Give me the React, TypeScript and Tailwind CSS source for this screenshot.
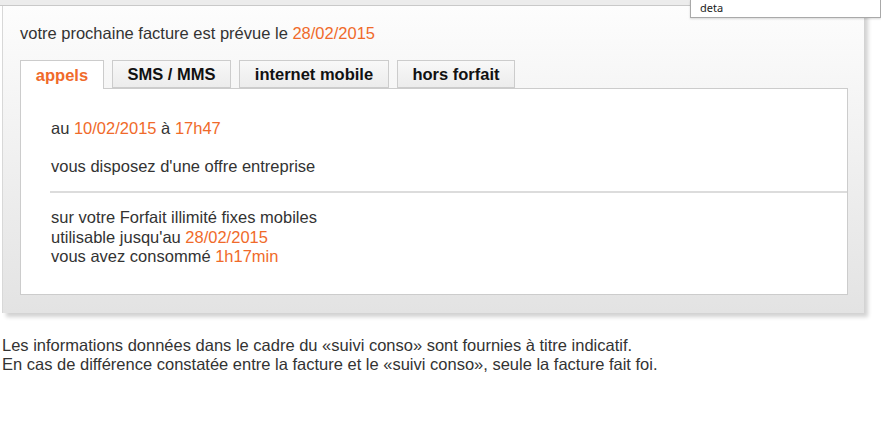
export default function App() {
  const orange = 'text-[#f06a2a]';
  return (
    <div className="relative w-[881px] h-[439px] bg-white font-['Liberation_Sans',Arial,sans-serif] text-[16.5px] leading-[19px] text-[#333]">
      {/* top band */}
      <div className="h-[6px] bg-[#ececec] border-b border-[#c9c9c9]" />

      {/* main panel */}
      <div className="ml-[2px] w-[862px] border-l border-[#d8d8d8] bg-gradient-to-b from-[#fdfdfd] to-[#e3e3e3] shadow-[4px_4px_4px_rgba(0,0,0,0.18)] pl-[17px] pr-[16px] pt-[18px] pb-[18px]">
        <p>
          votre prochaine facture est prévue le <span className={orange}>28/02/2015</span>
        </p>

        {/* tabs */}
        <div className="mt-[17px] flex gap-[8px] font-bold">
          <div className="w-[84px] h-[29px] -mb-px flex items-center justify-center border border-b-0 border-[#ccc] bg-white text-[#f06a2a]">
            appels
          </div>
          <div className="w-[119px] h-[28px] flex items-center justify-center border border-[#ccc] bg-gradient-to-b from-[#f8f8f8] to-[#ececec] text-[#111]">
            SMS / MMS
          </div>
          <div className="w-[150px] h-[28px] flex items-center justify-center border border-[#ccc] bg-gradient-to-b from-[#f8f8f8] to-[#ececec] text-[#111]">
            internet mobile
          </div>
          <div className="w-[118px] h-[28px] flex items-center justify-center border border-[#ccc] bg-gradient-to-b from-[#f8f8f8] to-[#ececec] text-[#111]">
            hors forfait
          </div>
        </div>

        {/* content box */}
        <div className="h-[207px] border border-[#ccc] bg-white pt-[30px]">
          <div className="pl-[30px]">
            <p>
              au <span className={orange}>10/02/2015</span> à <span className={orange}>17h47</span>
            </p>
            <p className="mt-[19px]">vous disposez d'une offre entreprise</p>
          </div>
          <div className="ml-[29px] mt-[15px] h-[2px] bg-[#dcdcdc]" />
          <div className="pl-[30px] mt-[15px] leading-[19.5px]">
            <p>sur votre Forfait illimité fixes mobiles</p>
            <p>
              utilisable jusqu'au <span className={orange}>28/02/2015</span>
            </p>
            <p>
              vous avez consommé <span className={orange}>1h17min</span>
            </p>
          </div>
        </div>
      </div>

      {/* disclaimer */}
      <div className="mt-[23px] ml-[2px]">
        <p>Les informations données dans le cadre du «suivi conso» sont fournies à titre indicatif.</p>
        <p>En cas de différence constatée entre la facture et le «suivi conso», seule la facture fait foi.</p>
      </div>

      {/* search field overlay */}
      <div className="absolute top-0 left-[690px] right-0 h-[18px] border border-t-0 border-[#a9a9a9] bg-white pl-[9px] font-['Noto_Sans',sans-serif] text-[11px] leading-[16px] text-[#222] shadow-[0_1px_2px_rgba(0,0,0,0.15)]">
        deta
      </div>
    </div>
  );
}
